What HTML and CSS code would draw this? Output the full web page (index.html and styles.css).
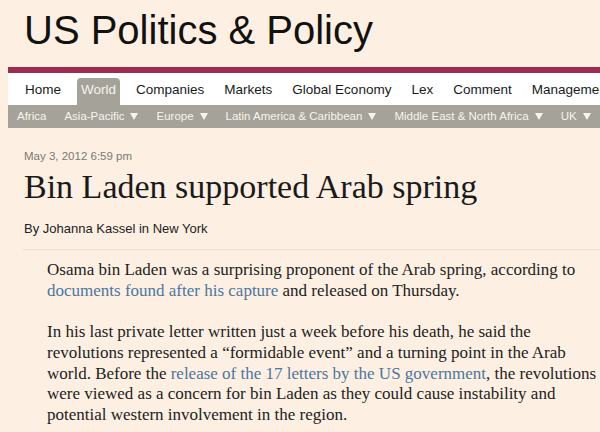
FILE: index.html
```html
<!DOCTYPE html>
<html lang="en">
<head>
<meta charset="utf-8">
<title>Bin Laden supported Arab spring</title>
<link rel="stylesheet" href="styles.css">
</head>
<body>
<header class="masthead">
  <h1 class="section-title">US Politics &amp; Policy</h1>
</header>
<nav class="nav">
  <ul class="nav-main">
    <li class="nav-item">Home</li>
    <li class="nav-item is-active">World</li>
    <li class="nav-item">Companies</li>
    <li class="nav-item">Markets</li>
    <li class="nav-item">Global Economy</li>
    <li class="nav-item">Lex</li>
    <li class="nav-item">Comment</li>
    <li class="nav-item">Management</li>
  </ul>
  <ul class="nav-sub">
    <li class="sub-item">Africa</li>
    <li class="sub-item">Asia-Pacific<svg class="caret" viewBox="0 0 7 6"><path d="M0 0H7L3.5 6Z"/></svg></li>
    <li class="sub-item">Europe<svg class="caret" viewBox="0 0 7 6"><path d="M0 0H7L3.5 6Z"/></svg></li>
    <li class="sub-item">Latin America &amp; Caribbean<svg class="caret" viewBox="0 0 7 6"><path d="M0 0H7L3.5 6Z"/></svg></li>
    <li class="sub-item">Middle East &amp; North Africa<svg class="caret" viewBox="0 0 7 6"><path d="M0 0H7L3.5 6Z"/></svg></li>
    <li class="sub-item">UK<svg class="caret" viewBox="0 0 7 6"><path d="M0 0H7L3.5 6Z"/></svg></li>
  </ul>
</nav>
<main class="article">
  <div class="article-date">May 3, 2012 6:59 pm</div>
  <h2 class="headline">Bin Laden supported Arab spring</h2>
  <div class="byline">By Johanna Kassel in New York</div>
  <hr class="divider">
  <div class="body">
    <p>Osama bin Laden was a surprising proponent of the Arab spring, according to <a class="link" href="#">documents found after his capture</a> and released on Thursday.</p>
    <p>In his last private letter written just a week before his death, he said the revolutions represented a &ldquo;formidable event&rdquo; and a turning point in the Arab world. Before the <a class="link" href="#">release of the 17 letters by the US government</a>, the revolutions were viewed as a concern for bin Laden as they could cause instability and potential western involvement in the region.</p>
  </div>
</main>
</body>
</html>
```

FILE: styles.css
```css
html, body {
  margin: 0;
  padding: 0;
}
body {
  background: #fdf0e2;
  width: 600px;
  height: 432px;
  overflow: hidden;
  font-family: "Liberation Sans", Arial, sans-serif;
}
.masthead {
  padding: 7px 0 0 24px;
}
.section-title {
  margin: 0;
  font-family: "Liberation Sans", Arial, sans-serif;
  font-weight: normal;
  font-size: 40px;
  line-height: 46px;
  color: #111;
}
.nav {
  margin: 14px 0 0 8px;
  border-top: 6px solid #9e2c4e;
  white-space: nowrap;
  overflow: hidden;
}
.nav-main {
  list-style: none;
  margin: 0;
  padding: 5px 0 0 13px;
  height: 27px;
  background: #fff;
  display: flex;
  gap: 12px;
}
.nav-item {
  height: 27px;
  line-height: 23px;
  padding: 0 4px;
  font-size: 13.5px;
  color: #1a1a1a;
  border-radius: 4px 4px 0 0;
}
.nav-item.is-active {
  background: #a5a299;
  color: #f6f3ee;
}
.nav-sub {
  list-style: none;
  margin: 0;
  padding: 0;
  height: 23px;
  background: #a5a299;
  display: flex;
}
.sub-item {
  padding: 0 9px;
  line-height: 23px;
  font-size: 11.5px;
  color: #f7f4ef;
  display: flex;
  align-items: center;
}
.caret {
  width: 8px;
  height: 7px;
  margin-left: 6px;
  fill: currentColor;
}
.article {
  padding: 20px 0 0 24px;
}
.article-date {
  font-size: 11.5px;
  line-height: 14px;
  color: #7a7873;
  margin-top: 1px;
}
.headline {
  margin: 5px 0 0;
  font-family: "Liberation Serif", "Times New Roman", serif;
  font-weight: normal;
  font-size: 34px;
  line-height: 38px;
  color: #1a1a1a;
}
.byline {
  margin-top: 15px;
  font-size: 13px;
  line-height: 16px;
  color: #222;
}
.divider {
  margin: 12px 0 0 -1px;
  border: 0;
  height: 1px;
  background: #eadfd1;
}
.body {
  padding: 10px 0 0 23px;
  font-family: "Liberation Serif", "Times New Roman", serif;
  font-size: 17px;
  line-height: 20.7px;
  color: #222;
}
.body p {
  margin: 0 0 20.7px;
}
.link {
  color: #4b76a0;
  text-decoration: none;
}
```
